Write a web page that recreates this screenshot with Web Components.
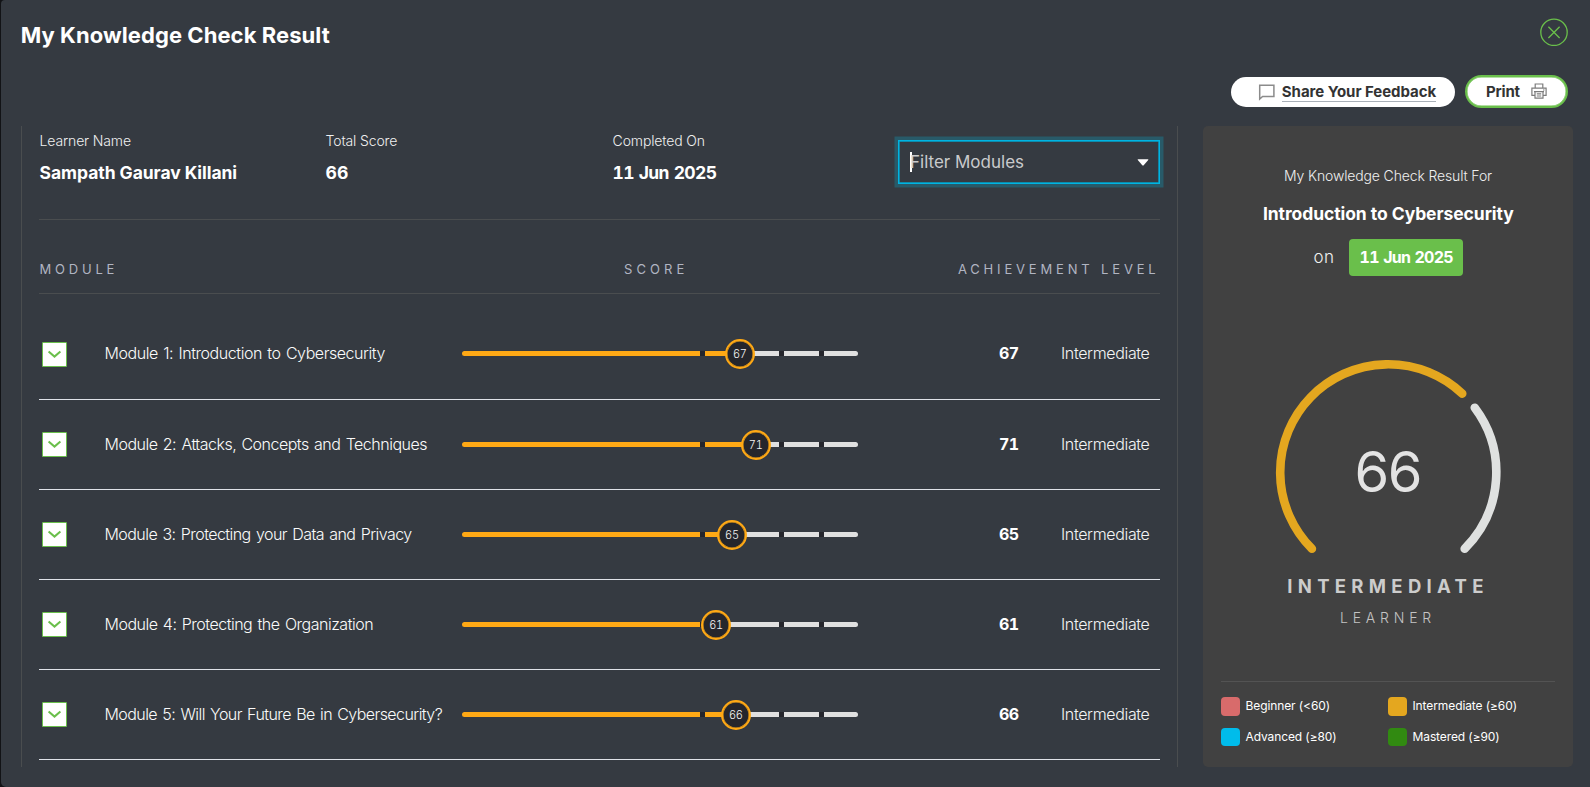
<!DOCTYPE html>
<html lang="en">
<head>
<meta charset="utf-8">
<title>My Knowledge Check Result</title>
<style>
  html, body { margin: 0; height: 100%; overflow: hidden; background: #121316; }
  body { font-family: Inter, "Liberation Sans", sans-serif; color: #fff; }
</style>
</head>
<body>
<result-dialog heading="My Knowledge Check Result">
  <action-bar slot="actions"></action-bar>
  <module-report slot="report">
    <summary-item label="Learner Name">Sampath Gaurav Killani</summary-item>
    <summary-item label="Total Score">66</summary-item>
    <summary-item label="Completed On" style="--track:-.65px;--space:.8px;--numeric:tabular-nums">11 Jun 2025</summary-item>
    <filter-select placeholder="Filter Modules"></filter-select>
    <module-row slot="rows" score="67" level="Intermediate" style="--nudge:-1px;--lift:-4px;--track:-.44px">Module 1: Introduction to Cybersecurity</module-row>
    <module-row slot="rows" score="71" level="Intermediate" style="--track:-.5px">Module 2: Attacks, Concepts and Techniques</module-row>
    <module-row slot="rows" score="65" level="Intermediate" style="--track:-.55px">Module 3: Protecting your Data and Privacy</module-row>
    <module-row slot="rows" score="61" level="Intermediate" style="--track:-.49px">Module 4: Protecting the Organization</module-row>
    <module-row slot="rows" score="66" level="Intermediate" style="--track:-.565px">Module 5: Will Your Future Be in Cybersecurity?</module-row>
  </module-report>
  <score-card slot="card">
    <score-gauge value="66"></score-gauge>
    <legend-item slot="legend" style="--c:#d86b6b">Beginner (&lt;60)</legend-item>
    <legend-item slot="legend" style="--c:#e4a71f">Intermediate (≥60)</legend-item>
    <legend-item slot="legend" style="--c:#00bceb">Advanced (≥80)</legend-item>
    <legend-item slot="legend" style="--c:#318a11">Mastered (≥90)</legend-item>
  </score-card>
</result-dialog>

<script>
const define = (name, render) => customElements.define(name, class extends HTMLElement {
  constructor() { super(); this.attachShadow({ mode: 'open' }); }
  connectedCallback() { this.shadowRoot.innerHTML = render(this); }
});

define('result-dialog', el => `
<style>
  :host { display: flex; flex-direction: column; box-sizing: border-box; height: 786.5px; margin-left: 1px;
    background: #353a41; border-radius: 4px 0 0 5px; }
  header { display: flex; justify-content: space-between; box-sizing: border-box; height: 75px; padding: 18px 22px 0 19.7px; }
  h1 { margin: 3px 0 0; font-size: 22px; line-height: 28px; font-weight: 700; letter-spacing: .07px; }
  button { width: 28px; height: 28px; padding: 0; border: 0; background: none; }
  svg { display: block; }
  main { display: grid; grid-template-columns: 1157px 370px; gap: 25px; height: 641px; margin: 18px 0 0 20px; }
</style>
<header>
  <h1>${el.getAttribute('heading')}</h1>
  <button aria-label="Close"><svg width="28" height="28" viewBox="0 0 28 28" fill="none" stroke="#6abf4b" stroke-width="1.3"><circle cx="14" cy="14.3" r="13.2"/><path d="M8.4 8.8l11.2 11.2M19.6 8.8L8.4 20"/></svg></button>
</header>
<slot name="actions"></slot>
<main><slot name="report"></slot><slot name="card"></slot></main>`);

define('action-bar', () => `
<style>
  :host { display: flex; justify-content: flex-end; align-items: center; gap: 10px; height: 33px; padding-right: 22px; }
  button { display: flex; align-items: center; box-sizing: border-box; border: 0; border-radius: 17px; background: #fff;
    color: #333; font: 700 15px/18px Inter, sans-serif; white-space: nowrap; }
  .share { width: 224.5px; height: 30px; padding: 0 0 0 27px; gap: 6.3px; letter-spacing: -.04px; }
  .share span { border-bottom: 1px solid #a9b0b8; padding-top: 2px; height: 18px; line-height: 18px; }
  .print { width: 103px; height: 33px; padding: 0 0 0 19px; gap: 10.8px; border: 2px solid #6abf4b; box-shadow: inset 0 0 0 .5px #6abf4b; letter-spacing: -.2px; }
  svg { flex: none; display: block; }
  .print svg { margin-top: -1px; }
</style>
<button class="share">
  <svg width="18" height="18" viewBox="0 0 18 18" fill="none" stroke="#8b8b8b" stroke-width="1.5"><path d="M1.7 2.2h14.2v11.2H4.6l-2.9 2.7z"/></svg>
  <span>Share Your Feedback</span>
</button>
<button class="print">Print
  <svg width="16" height="16" viewBox="0 0 16 16" fill="none" stroke="#7c7c7c" stroke-width="1.2"><path d="M4.2 5V1h7.6v4M4 12.3H.9V5.2h14.2v7.1H12"/><path d="M3 8.7h10M4 8.7v6.5h8V8.7M5.8 10.9h4.4M5.8 13h4.4M12 7h1.5"/></svg>
</button>`);

define('module-report', () => `
<style>
  :host { display: block; box-sizing: border-box; height: 641px; padding: 0 17px; border: solid #4a4d4f; border-width: 0 1px; }
  .summary { display: grid; grid-template-columns: 286px 287px 286px 262px; height: 93px; border-bottom: 1px solid #4a4d4f; }
  .head { display: flex; box-sizing: border-box; height: 74px; padding-top: 39px; border-bottom: 1px solid #4a4d4f;
    font-size: 13px; line-height: 20px; letter-spacing: 3.8px; color: #b1b5c2; }
  .head :nth-child(1) { width: 585px; text-indent: .5px; }
  .head :nth-child(2) { flex: 1; letter-spacing: 4.1px; }
  .head :nth-child(3) { letter-spacing: 3.83px; padding-right: .5px; }
  .rows { margin-top: 16px; }
</style>
<div class="summary"><slot></slot></div>
<div class="head"><span>MODULE</span><span>SCORE</span><span>ACHIEVEMENT LEVEL</span></div>
<div class="rows"><slot name="rows"></slot></div>`);

define('summary-item', el => `
<style>
  :host { display: block; padding: 5px 0 0 .6px; white-space: nowrap; }
  .label { font-size: 14px; line-height: 20px; font-weight: 300; letter-spacing: -.14px; color: #f0f0f0; }
  .value { margin-top: 9.5px; font-size: 17.5px; line-height: 24px; font-weight: 700; letter-spacing: var(--track, -.06px); word-spacing: var(--space, 0px); font-variant-numeric: var(--numeric, normal); }
</style>
<div class="label">${el.getAttribute('label')}</div>
<div class="value"><slot></slot></div>`);

define('filter-select', el => `
<style>
  :host { display: flex; align-items: center; box-sizing: border-box; height: 44px; margin: 14px .5px 0 0; padding: 0 10px 0 11px;
    border: 1px solid #00b4e2; box-shadow: 0 0 0 3.5px #285a69, inset 0 0 0 .7px #00a6d0; }
  i { width: 1.6px; height: 20px; margin-right: -1.6px; background: #fff; }
  span { flex: 1; font-size: 17px; line-height: 24px; letter-spacing: 0; color: #c9cacc; }
  svg { display: block; }
</style>
<i></i><span>${el.getAttribute('placeholder')}</span>
<svg width="12" height="7" viewBox="0 0 12 7"><path d="M1 .3h10q.7.2.2.8L6.5 6.4q-.5.4-1 0L.8 1.1Q.4.4 1 .3z" fill="#fff"/></svg>`);

define('module-row', el => `
<style>
  :host { display: flex; align-items: center; box-sizing: border-box; height: 90px; padding-left: 3px; border-bottom: 1px solid #dfe2e8;
    font-size: 16px; line-height: 24px; font-weight: 300; white-space: nowrap; }
  .toggle { box-sizing: border-box; width: 25px; height: 25px; padding: 0; border: 1px solid #6abf4b; background: #fff; border-radius: 1px; }
  .toggle svg { display: block; width: 23px; height: 23px; }
  .name { width: 357px; margin-left: 37.5px; letter-spacing: var(--track, -.48px); word-spacing: 1.3px; }
  score-track { position: relative; top: var(--nudge, 0px); }
  .name, b, .level { margin-top: var(--lift, -2px); }
  .name { color: #fafafa; }
  b { margin-left: 141.5px; width: 62px; font-weight: 700; letter-spacing: -.7px; font-variant-numeric: tabular-nums; }
  .level { letter-spacing: -.35px; color: #f4f4f4; }
</style>
<button class="toggle" aria-label="Expand"><svg viewBox="0 0 23 23" fill="none" stroke="#6abf4b" stroke-width="2"><path d="M5.6 8.4l5.9 5.2 5.9-5.2"/></svg></button>
<span class="name"><slot></slot></span>
<score-track value="${el.getAttribute('score')}"></score-track>
<b>${el.getAttribute('score')}</b>
<span class="level">${el.getAttribute('level')}</span>`);

define('score-track', el => {
  const v = +el.getAttribute('value');
  return `
<style>
  :host { display: block; flex: none; width: 396px; height: 5px; }
  .bar { height: 5px; border-radius: 2.5px; overflow: hidden; background:
    linear-gradient(#25262c, #25262c) 238px 0 / 5px 5px no-repeat,
    linear-gradient(#25262c, #25262c) 317px 0 / 5px 5px no-repeat,
    linear-gradient(#25262c, #25262c) 357px 0 / 5px 5px no-repeat,
    linear-gradient(90deg, #ffa915 calc(${v}% + 10px), #e0e0e0 0); }
  .knob { position: absolute; left: calc(${v}% - 2px); top: -12.5px; box-sizing: border-box; width: 30px; height: 30px;
    border: 2px solid #ffa915; box-shadow: inset 0 0 0 .5px #ffa915; border-radius: 50%; background: #25262c; font-size: 11px; line-height: 26px;
    font-weight: 300; text-align: center; letter-spacing: -.3px; color: #f4f4f4; font-variant-numeric: tabular-nums; }
</style>
<div class="bar"></div><div class="knob">${v}</div>`;
});

define('score-card', () => `
<style>
  :host { display: flex; flex-direction: column; align-items: center; box-sizing: border-box; height: 641px; padding: 40px 18px 21px;
    background: #414141; border-radius: 5px; }
  .over { font-size: 14px; line-height: 20px; font-weight: 300; letter-spacing: -.144px; color: #f0f0f0; }
  .course { margin-top: 15.6px; padding-left: .6px; font-size: 17.5px; line-height: 24px; font-weight: 700; letter-spacing: -.07px; }
  .date { display: flex; align-items: center; gap: 15px; margin-top: 13.4px; padding-left: .8px; font-size: 17px; line-height: 24px; font-weight: 300; letter-spacing: .3px; color: #f0f0f0; }
  .date b { width: 114px; height: 37px; border-radius: 4px; background: #6abf4b; color: #fff; font-size: 16px; line-height: 37px; font-weight: 700; letter-spacing: -.75px; word-spacing: .8px; text-align: center; font-variant-numeric: tabular-nums; }
  .gauge { margin-top: 84px; }
  .level { margin-top: 18.6px; font-size: 18.5px; line-height: 24px; font-weight: 700; letter-spacing: 5.3px; color: #ccc; }
  .who { margin-top: 10.4px; font-size: 14px; line-height: 20px; font-weight: 300; letter-spacing: 4.8px; color: #c4c4c4; }
  .legend { display: grid; grid-template-columns: 1fr 1fr; row-gap: 12px; align-self: stretch; margin-top: auto; padding-top: 15px; border-top: 1px solid #535353; }
</style>
<div class="over">My Knowledge Check Result For</div>
<div class="course">Introduction to Cybersecurity</div>
<div class="date"><span>on</span><b>11 Jun 2025</b></div>
<div class="gauge"><slot></slot></div>
<div class="level">INTERMEDIATE</div>
<div class="who">LEARNER</div>
<div class="legend"><slot name="legend"></slot></div>`);

define('score-gauge', el => {
  const cx = 113.3, cy = 112.4, r = 108;
  const at = deg => {
    const a = deg * Math.PI / 180;
    return (cx + r * Math.sin(a)).toFixed(2) + ' ' + (cy - r * Math.cos(a)).toFixed(2);
  };
  const end = -135 + 270 * el.getAttribute('value') / 100;
  return `
<style>:host { display: block; width: 226px; height: 195px; } svg { display: block; overflow: visible; }</style>
<svg width="226" height="195" fill="none" stroke-width="8.6" stroke-linecap="round">
  <path stroke="#e4a71f" d="M${at(-135)}A${r} ${r} 0 0 1 ${at(end)}"/>
  <path stroke="#dfe1e0" d="M${at(end + 10)}A${r} ${r} 0 0 1 ${at(135)}"/>
  <text x="112.8" y="132.4" text-anchor="middle" font-size="56" font-weight="400" letter-spacing="-1.5" fill="#e3e3e3" stroke="none">${el.getAttribute('value')}</text>
</svg>`;
});

define('legend-item', () => `
<style>
  :host { display: flex; align-items: center; gap: 6px; height: 18.5px; font-size: 12px; line-height: 18px; letter-spacing: -.1px; white-space: nowrap; }
  i { width: 18.5px; height: 18.5px; border-radius: 4px; background: var(--c); }
</style>
<i></i><span><slot></slot></span>`);
</script>
</body>
</html>
